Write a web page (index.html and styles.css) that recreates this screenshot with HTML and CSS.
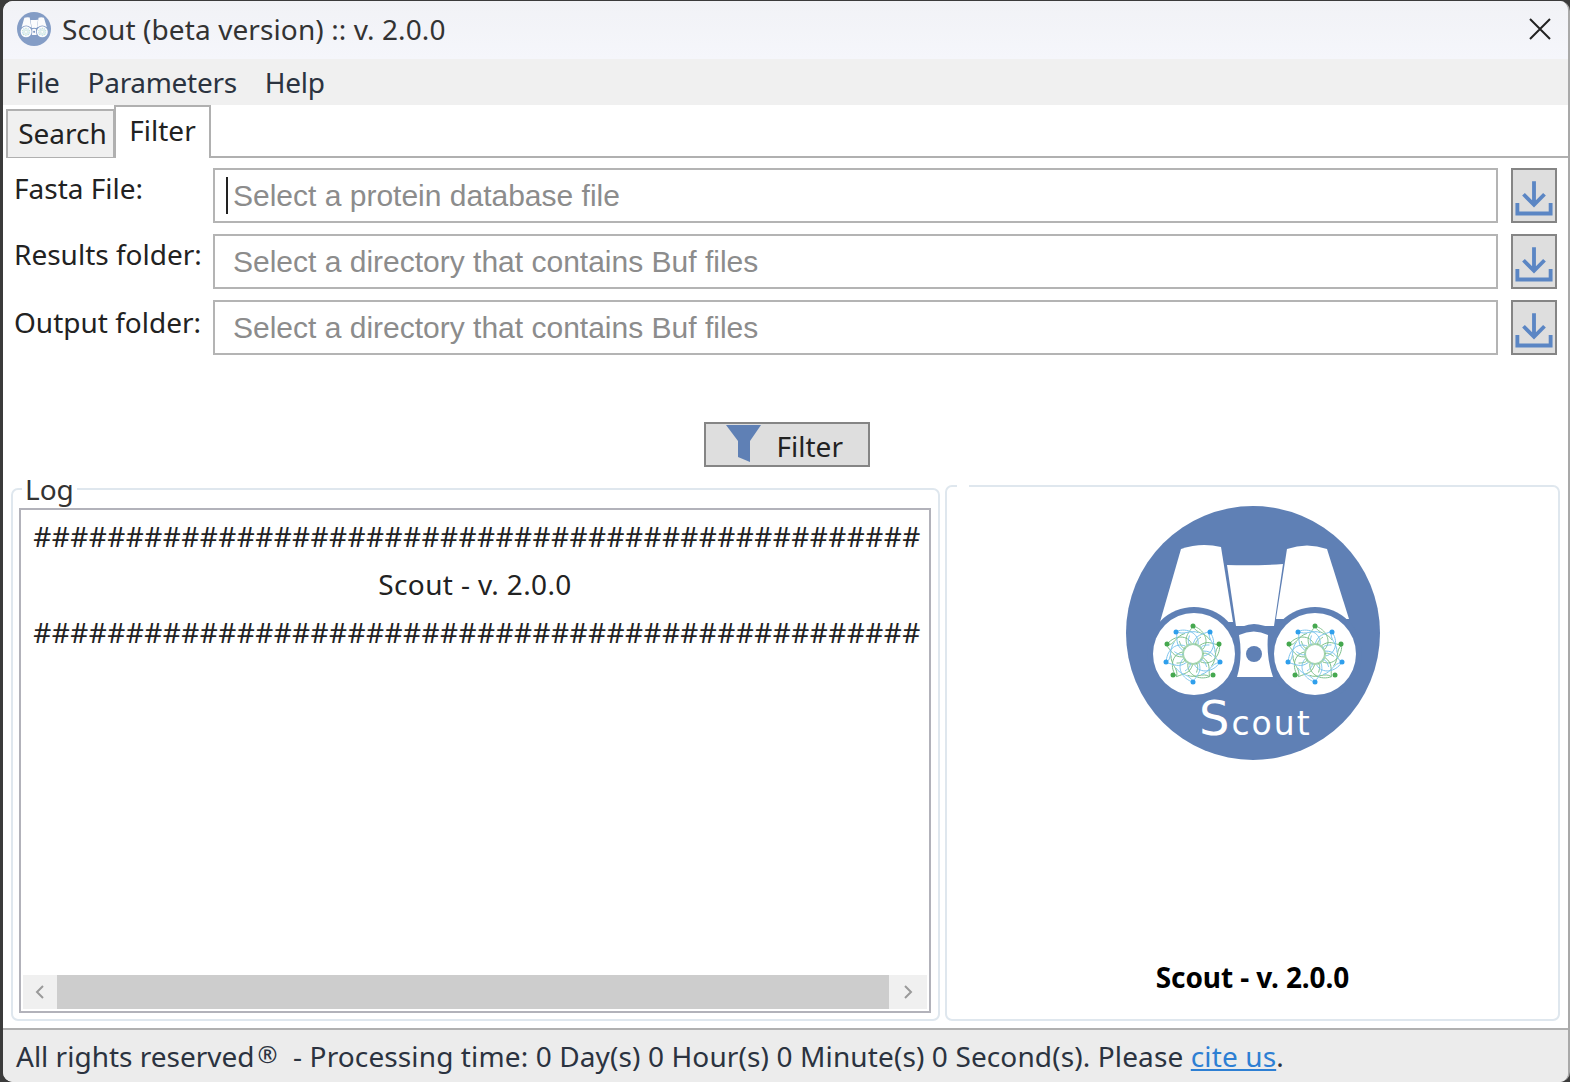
FILE: index.html
```html
<!DOCTYPE html>
<html lang="en">
<head>
<meta charset="utf-8">
<title>Scout (beta version) :: v. 2.0.0</title>
<link rel="stylesheet" href="styles.css">
</head>
<body>
<svg class="defs" width="0" height="0" aria-hidden="true">
  <defs>
    <g id="arm">
      <path d="M0-28C11-25 17-13 10-5"/>
      <path d="M0-28C-4-21-9-18-6-9"/>
      <path d="M0-28C3-20 12-22 17-14"/>
      <path d="M8-17C4-14 2-12 3-9"/>
    </g>
    <g id="net">
      <circle class="net-ring" r="10"/>
      <circle class="net-inner" r="6.5"/>
      <g class="net-g">
        <use href="#arm"/>
        <use href="#arm" transform="rotate(72)"/>
        <use href="#arm" transform="rotate(144)"/>
        <use href="#arm" transform="rotate(216)"/>
        <use href="#arm" transform="rotate(288)"/>
      </g>
      <g class="net-b">
        <use href="#arm" transform="rotate(36)"/>
        <use href="#arm" transform="rotate(108)"/>
        <use href="#arm" transform="rotate(180)"/>
        <use href="#arm" transform="rotate(252)"/>
        <use href="#arm" transform="rotate(324)"/>
      </g>
      <g class="dot-g">
        <circle cy="-28" r="2.5"/><circle cx="26" cy="-10" r="2.5"/><circle cx="20" cy="21" r="2.5"/><circle cx="-20" cy="21" r="2.5"/><circle cx="-26" cy="-10" r="2.5"/>
      </g>
      <g class="dot-b">
        <circle cx="17" cy="-22" r="2.5"/><circle cx="27" cy="8" r="2.5"/><circle cy="28" r="2.5"/><circle cx="-27" cy="8" r="2.5"/><circle cx="-17" cy="-22" r="2.5"/>
      </g>
    </g>
    <g id="logo">
      <circle class="logo-bg" cx="152" cy="141" r="127"/>
      <path class="logo-w" d="M80 57Q100 50 120 55L132 130H59Z"/>
      <path class="logo-w" d="M186 57Q206 50 226 57L248 127H175Z"/>
      <path class="logo-w" d="M126 73Q154 74 182 72L173 134H135Z"/>
      <circle class="logo-bg" cx="93" cy="162" r="47"/>
      <circle class="logo-bg" cx="214" cy="162" r="47"/>
      <path class="logo-bg" d="M130 142Q153 122 176 142V150H130Z"/>
      <path class="logo-w" d="M138 143Q153 136 167 143Q165 165 172 185H136Q142 165 138 143Z"/>
      <circle class="logo-bg" cx="153" cy="162" r="8"/>
      <circle class="logo-w" cx="93" cy="162" r="41"/>
      <circle class="logo-w" cx="214" cy="162" r="41"/>
      <use href="#net" x="92" y="162"/>
      <use href="#net" x="214" y="162"/>
    </g>
    <g id="download" class="dl-g">
      <path d="M24 8V35M12 23L24 35L36 23"/>
      <path d="M5 33V45H43V33"/>
    </g>
  </defs>
</svg>
<div class="window">
  <header class="titlebar">
    <svg class="app-icon" viewBox="25 14 254 254"><use href="#logo"/></svg>
    <span class="title">Scout (beta version) :: v. 2.0.0</span>
    <svg class="close" viewBox="0 0 22 22"><path d="M1 1L21 21M21 1L1 21"/></svg>
  </header>
  <nav class="menubar">
    <span>File</span><span>Parameters</span><span>Help</span>
  </nav>
  <div class="tabs">
    <div class="tab">Search</div>
    <div class="tab tab-active">Filter</div>
    <div class="tab-rest"></div>
  </div>
  <main class="content">
    <div class="form">
      <label class="form-label">Fasta File:</label>
      <div class="field field-focus"><span class="caret"></span><input placeholder="Select a protein database file"></div>
      <button class="browse" aria-label="Browse"><svg class="dl" viewBox="0 0 48 50"><use href="#download"/></svg></button>

      <label class="form-label">Results folder:</label>
      <div class="field"><input placeholder="Select a directory that contains Buf files"></div>
      <button class="browse" aria-label="Browse"><svg class="dl" viewBox="0 0 48 50"><use href="#download"/></svg></button>

      <label class="form-label form-label-low">Output folder:</label>
      <div class="field"><input placeholder="Select a directory that contains Buf files"></div>
      <button class="browse" aria-label="Browse"><svg class="dl" viewBox="0 0 48 50"><use href="#download"/></svg></button>
    </div>
    <div class="action">
      <button class="filter-btn">
        <svg class="funnel" viewBox="0 0 36 38"><path d="M0 0H35L24 16V37L12 32V16Z"/></svg>
        <span class="filter-label">Filter</span>
      </button>
    </div>
    <div class="panels">
      <fieldset class="group group-log">
        <legend class="group-title">Log</legend>
        <div class="logbox">
          <div class="log-lines">
            <div class="hashes">################################################</div>
            <div>Scout - v. 2.0.0</div>
            <div class="hashes">################################################</div>
          </div>
          <div class="hscroll">
            <span class="arrow">
              <svg viewBox="0 0 12 16"><path d="M9 2L3 8L9 14"/></svg>
            </span>
            <span class="thumb"></span>
            <span class="arrow arrow-next">
              <svg viewBox="0 0 12 16"><path d="M3 2L9 8L3 14"/></svg>
            </span>
          </div>
        </div>
      </fieldset>
      <fieldset class="group group-logo">
        <legend class="group-gap"></legend>
        <svg class="logo" viewBox="2 0 300 280">
          <use href="#logo"/>
          <text class="logo-text" x="98" y="243"><tspan class="logo-s">S</tspan>cout</text>
        </svg>
        <div class="caption">Scout - v. 2.0.0</div>
      </fieldset>
    </div>
  </main>
  <footer class="statusbar">
    <span class="reserved">All rights reserved</span><span class="reg">®</span><span> - Processing time: 0 Day(s) 0 Hour(s) 0 Minute(s) 0 Second(s). Please <a href="#">cite us</a>.</span>
  </footer>
</div>
</body>
</html>
```
FILE: styles.css
```css
* { box-sizing: border-box; }
html, body { margin: 0; height: 100%; overflow: hidden; }
body {
  background: #3b3b3b;
  font-family: "Noto Sans", "Open Sans", sans-serif;
  font-size: 28px;
  color: #222;
  padding: 1px 0 0 3px;
}
.defs { position: absolute; }
.window {
  height: 1081px;
  display: flex;
  flex-direction: column;
  border-radius: 10px;
  overflow: hidden;
  background: #fff;
  border-right: 2px solid #a9a9a9;
}

/* title bar */
.titlebar {
  height: 58px;
  flex: none;
  display: flex;
  align-items: center;
  padding: 0 0 3px 14px;
  background: linear-gradient(#f1f2f6, #f5f6fb);
  color: #333;
}
.app-icon { width: 34px; height: 34px; opacity: .75; margin-right: 11px; }
.title { flex: 1; letter-spacing: .1px; }
.close { width: 22px; height: 22px; margin-right: 17px; }
.close path { stroke: #222; stroke-width: 2; fill: none; }

/* menu */
.menubar {
  height: 46px;
  flex: none;
  display: flex;
  align-items: center;
  gap: 28px;
  padding-left: 13px;
  background: #f0f0f0;
  color: #2b3340;
  letter-spacing: -.3px;
}

/* tabs */
.tabs { height: 53px; flex: none; display: flex; align-items: flex-end; padding-left: 3px; }
.tab {
  width: 109px;
  height: 49px;
  display: flex;
  align-items: center;
  justify-content: center;
  padding: 0 0 3px 4px;
  background: #f0f0f0;
  border: 2px solid #b0b0b0;
  border-bottom-width: 1px;
}
.tab-active {
  width: 97px;
  height: 53px;
  margin-left: -1px;
  background: #fff;
  border-bottom: 0;
  padding: 0 0 6px;
}
.tab-rest { flex: 1; border-bottom: 2px solid #b0b0b0; }

/* content */
.content { flex: 1; display: flex; flex-direction: column; padding: 10px 6px 7px 8px; min-height: 0; }
.form {
  display: grid;
  grid-template-columns: 188px 1285px 46px;
  grid-auto-rows: 55px;
  column-gap: 13px;
  row-gap: 11px;
  padding-left: 1px;
}
.form-label { padding-left: 2px; line-height: 40px; white-space: nowrap; }
.form-label-low { line-height: 44px; }
.field {
  display: flex;
  align-items: center;
  padding-left: 18px;
  border: 2px solid #b4b4b4;
  background: #fff;
}
.field-focus { padding-left: 11px; }
.caret { width: 2px; height: 37px; background: #222; margin-right: 5px; flex: none; }
.field input {
  flex: 1;
  min-width: 0;
  border: 0;
  padding: 0;
  outline: 0;
  font-family: "Liberation Sans", Arial, sans-serif;
  font-size: 30px;
  background: transparent;
}
.field input::placeholder { color: #8c8c8c; opacity: 1; }
.browse {
  padding: 0;
  display: flex;
  align-items: center;
  justify-content: center;
  background: #dedede;
  border: 2px solid #858585;
}
.dl { width: 42px; height: 46px; }
.dl-g path { fill: none; stroke: #5b86c4; stroke-width: 4.4; }

.action { display: flex; justify-content: center; margin-top: 67px; }
.filter-btn {
  width: 166px;
  height: 45px;
  display: flex;
  align-items: center;
  padding: 0 0 0 20px;
  gap: 15px;
  background: #dedede;
  border: 2px solid #858585;
  font: inherit;
  color: #222;
}
.funnel { width: 36px; height: 38px; margin-top: -2px; }
.funnel path { fill: #5f80b5; }
.filter-label { margin-top: 3px; }

.panels {
  flex: 1;
  min-height: 0;
  display: grid;
  grid-template-columns: 929px 615px;
  column-gap: 5px;
  align-items: stretch;
  margin-top: 4px;
}
.group {
  margin: 0;
  min-width: 0;
  min-inline-size: 0;
  border: 2px solid #dfe7ee;
  border-radius: 7px;
  display: flex;
  flex-direction: column;
}
.group-log { padding: 0 7px 6px 6px; }
.group-title { margin-left: 3px; padding: 0 3px; line-height: 36px; color: #333; }
.logbox {
  flex: 1;
  min-height: 0;
  border: 2px solid #b2b2ba;
  padding: 2px;
  display: flex;
  flex-direction: column;
  margin-top: 1px;
}
.log-lines {
  flex: 1;
  min-height: 0;
  text-align: center;
  line-height: 48px;
  overflow: hidden;
  letter-spacing: .35px;
}
.hashes { padding-left: 4px; letter-spacing: .4px; white-space: nowrap; }
.hscroll { height: 34px; flex: none; display: flex; background: #f0f0f0; }
.arrow { width: 34px; display: flex; align-items: center; justify-content: center; }
.arrow-next { width: 38px; }
.arrow svg { width: 12px; height: 16px; }
.arrow path { fill: none; stroke: #9a9a9a; stroke-width: 2; }
.thumb { flex: 1; background: #cdcdcd; }

.group-logo { padding: 0; margin-top: 14px; align-items: center; }
.group-gap { margin-left: 10px; width: 12px; height: 0; padding: 0; }
.logo { width: 300px; height: 280px; margin-top: 5px; flex: none; }
.logo-bg { fill: #5f80b5; }
.logo-w { fill: #fff; }
.net-ring { fill: none; stroke: #a5d5b0; stroke-width: 2; }
.net-inner { fill: #fff; }
.net-g { fill: none; stroke: #7cc08a; stroke-width: .9; }
.net-b { fill: none; stroke: #7cc4ec; stroke-width: .9; }
.dot-g { fill: #45a84f; }
.dot-b { fill: #2f9fec; }
.logo-text { fill: #fff; font-family: "DejaVu Sans", sans-serif; font-weight: 400; font-size: 33px; letter-spacing: 2px; }
.logo-s { font-size: 48px; }
.caption { margin-top: 186px; font-weight: 700; color: #000; letter-spacing: -.1px; }

/* status */
.statusbar {
  height: 54px;
  flex: none;
  display: flex;
  align-items: center;
  padding-left: 13px;
  white-space: pre;
  background: #ececec;
  border-top: 2px solid #b0b0b0;
  letter-spacing: .12px;
  color: #2b3340;
}
.reserved { letter-spacing: 0; }
.reg { margin: -6px 8px 0 3px; font-size: 24px; }
.statusbar a { color: #2d7fd3; }
```
